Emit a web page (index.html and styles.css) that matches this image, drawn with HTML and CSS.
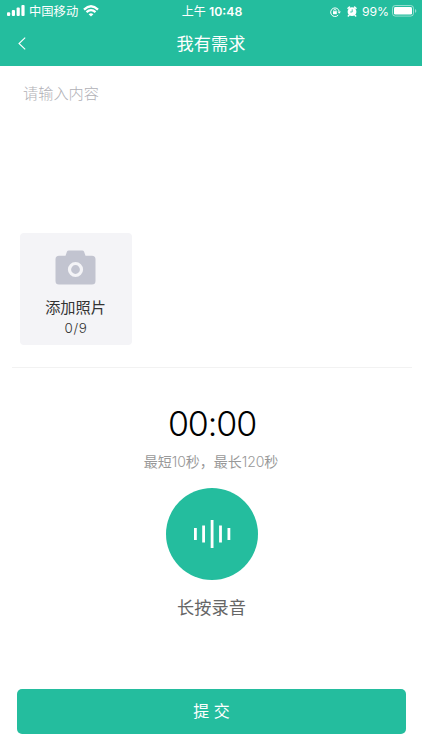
FILE: index.html
```html
<!DOCTYPE html>
<html lang="zh-CN">
<head>
<meta charset="utf-8">
<title>我有需求</title>
<link rel="stylesheet" href="styles.css">
</head>
<body>
<header class="header">
  <div class="status">
    <div class="status-left">
      <svg class="signal" width="18" height="11" viewBox="0 0 18 11" fill="#fff"><rect x="0" y="7.2" width="3.2" height="3.8" rx="1"/><rect x="4.8" y="5" width="3.2" height="6" rx="1"/><rect x="9.6" y="2.6" width="3.2" height="8.4" rx="1"/><rect x="14.4" y="0" width="3.2" height="11" rx="1"/></svg>
      <span class="carrier">中国移动</span>
      <svg class="wifi" width="16" height="12" viewBox="0 0 16 12" fill="none" stroke="#fff" stroke-width="2.3"><path d="M1 4.6Q8-2 15 4.6"/><path d="M3.5 7.2Q8 3.1 12.5 7.2"/><path d="M8 11.6L5.6 9.2Q8 7.2 10.4 9.2Z" fill="#fff" stroke="none"/></svg>
    </div>
    <span class="clock">上午 <span class="digits">10:48</span></span>
    <div class="status-right">
      <svg class="lock" width="11" height="10" viewBox="0 0 11 10" fill="none" stroke="#fff"><path d="M8.2 8.1A4.3 4.3 0 1 1 9.2 4.3" stroke-width="1"/><path d="M7.5 4.4h3.4L9.2 6.8z" fill="#fff" stroke="none"/><rect x="3" y="4.2" width="3.8" height="3" fill="#fff" stroke="none"/><path d="M3.8 4.5V3.4a1.1 1.1 0 0 1 2.2 0v1.1" stroke-width=".8"/></svg>
      <svg class="alarm" width="10" height="11" viewBox="0 0 10 11"><circle cx="5" cy="5.7" r="4.4" fill="#fff"/><path d="M1 2.3L2.4 1.1M9 2.3L7.6 1.1M2 9.2L1.3 10M8 9.2l.7.8" stroke="#fff" stroke-width="1.5" stroke-linecap="round"/><path d="M5.2 3.3v2.7H3.2" fill="none" stroke="#24bd9e" stroke-width=".8"/></svg>
      <span class="percent">99%</span>
      <svg class="battery" width="25" height="12" viewBox="0 0 25 12"><rect x=".5" y=".5" width="21" height="10.6" rx="2.8" fill="none" stroke="#fff" stroke-opacity=".5"/><rect x="2" y="2" width="18" height="7.6" rx="1.4" fill="#fff"/><path d="M23 4v3.8q1.3-.5 1.3-1.9T23 4" fill="#fff" fill-opacity=".5"/></svg>
    </div>
  </div>
  <nav class="nav">
    <svg class="back" width="8" height="13" viewBox="0 0 8 13" fill="none" stroke="#fff" stroke-width="1.1"><path d="M7.2.6L1 6.5l6.2 5.9"/></svg>
    <h1 class="title">我有需求</h1>
    <span></span>
  </nav>
</header>
<main class="content">
  <textarea class="input" placeholder="请输入内容"></textarea>
  <div class="upload">
    <svg class="camera" width="41" height="35" viewBox="0 0 41 35"><path d="M4 5.8h6.5L12 1.6Q12.5.5 13.8.5h13.4q1.3 0 1.8 1.1l1.5 4.2h6.5q3.5 0 3.5 3.5V31q0 3.5-3.5 3.5H4Q.5 34.5.5 31V9.3q0-3.5 3.5-3.5Z" fill="#c2c4d0"/><circle cx="20.5" cy="19.5" r="6" fill="none" stroke="#f4f4f7" stroke-width="3.2"/></svg>
    <span class="upload-label">添加照片</span>
    <span class="upload-count">0/9</span>
  </div>
  <section class="recorder">
    <div class="timer">00:00</div>
    <p class="hint">最短<span class="num">10</span>秒，最长<span class="num">120</span>秒</p>
    <button class="record" aria-label="长按录音">
      <svg width="38" height="28" viewBox="0 0 38 28" fill="#fff"><rect x="1" y="8" width="2.8" height="12"/><rect x="9.2" y="5.5" width="2.8" height="17"/><rect x="17.7" y="0" width="2.8" height="28"/><rect x="26.1" y="5.5" width="2.8" height="17"/><rect x="34.5" y="8" width="2.8" height="12"/></svg>
    </button>
    <p class="record-label">长按录音</p>
  </section>
</main>
<footer class="footer"><button class="submit">提 交</button></footer>
</body>
</html>
```
FILE: styles.css
```css
* { box-sizing: border-box; }
body {
  margin: 0;
  height: 750px;
  display: flex;
  flex-direction: column;
  overflow: hidden;
  background: #fff;
  font-family: "Liberation Sans", "Noto Sans CJK SC", sans-serif;
  font-weight: 300;
}
svg { display: block; flex: none; }
button { border: 0; padding: 0; font: inherit; }
.header { height: 65.5px; flex: none; background: #24bd9e; color: #fff; }
.status {
  height: 22px;
  display: grid;
  grid-template-columns: 1fr auto 1fr;
  align-items: center;
  padding: 0 5px 0 7px;
  font-size: 12px;
  line-height: 22px;
  white-space: nowrap;
}
.status-left, .status-right { display: flex; align-items: center; }
.status-right { justify-content: flex-end; }
.signal { margin-bottom: 2px; }
.wifi { margin-bottom: 1px; }
.carrier { margin-left: 4px; padding-top: 1px; font-size: 12.3px; font-weight: 400; }
.wifi { margin-left: 5px; }
.clock { padding-top: 1px; font-size: 12px; font-weight: 400; }
.digits { font: 600 12.3px Inter, sans-serif; }
.alarm { margin-left: 6px; }
.percent { margin: 0 3px 0 5px; font: 400 12.2px Inter, sans-serif; }
.battery { margin-bottom: 1px; }
.nav {
  height: 43px;
  display: grid;
  grid-template-columns: 1fr auto 1fr;
  align-items: center;
  padding: 0 18px;
}
.title { margin: 0; padding-top: 1px; font-size: 17.2px; font-weight: 400; line-height: 24px; }
.content { flex: 1; padding: 0 10px 0 12px; }
.input {
  display: block;
  width: 100%;
  height: 167.5px;
  border: 0;
  padding: 15px 11px;
  resize: none;
  outline: 0;
  font: 300 15.2px/22px "Noto Sans CJK SC", sans-serif;
}
.input::placeholder { color: #b0b0b6; opacity: 1; }
.upload {
  width: 112px;
  height: 112px;
  margin-left: 8px;
  padding-top: 17px;
  display: flex;
  flex-direction: column;
  align-items: center;
  border-radius: 4px;
  background: #f4f4f7;
  color: #333;
}
.camera, .upload-label { margin-right: 1px; }
.upload-label { margin-top: 12px; font-size: 15.2px; font-weight: 400; line-height: 22px; }
.upload-count { margin-top: -1px; font: 300 13.4px/20px Inter, sans-serif; letter-spacing: .6px; }
.recorder {
  margin-top: 22px;
  border-top: 1px solid #f2f2f2;
  display: flex;
  flex-direction: column;
  align-items: center;
}
.timer { margin-top: 35px; color: #000; font: 300 34px/42px Inter, sans-serif; letter-spacing: -1.1px; }
.hint { margin: 6px 2px 0 0; color: #999; font-size: 14px; font-weight: 400; line-height: 22px; }
.num { font-family: Inter, sans-serif; font-size: 14px; font-weight: 300; letter-spacing: -.1px; }
.record {
  width: 92px;
  height: 92px;
  margin-top: 15px;
  display: flex;
  align-items: center;
  justify-content: center;
  border-radius: 50%;
  background: #24bd9e;
}
.record-label { margin: 16px 1px 0 0; color: #666; font-size: 17.2px; font-weight: 400; line-height: 24px; }
.footer { flex: none; padding: 0 16px 16px 17px; }
.submit {
  display: block;
  width: 100%;
  height: 45px;
  padding-bottom: 3px;
  border-radius: 5px;
  background: #24bd9e;
  color: #fff;
  font-size: 16px;
  font-weight: 400;
}
```
